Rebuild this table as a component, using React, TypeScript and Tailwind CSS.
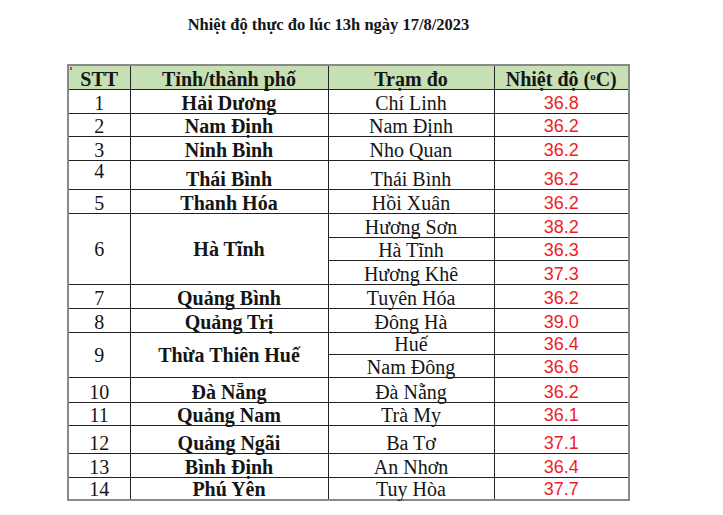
const serif = { fontFamily: '"Liberation Serif", "Times New Roman", serif' };

type Station = { name: string; temp: string; h: number };
type Row = { stt: string; province: string; stations: Station[]; sttTop?: boolean };

const rows: Row[] = [
  { stt: '1', province: 'Hải Dương', stations: [{ name: 'Chí Linh', temp: '36.8', h: 24 }] },
  { stt: '2', province: 'Nam Định', stations: [{ name: 'Nam Định', temp: '36.2', h: 23 }] },
  { stt: '3', province: 'Ninh Bình', stations: [{ name: 'Nho Quan', temp: '36.2', h: 24 }] },
  { stt: '4', province: 'Thái Bình', sttTop: true, stations: [{ name: 'Thái Bình', temp: '36.2', h: 29 }] },
  { stt: '5', province: 'Thanh Hóa', stations: [{ name: 'Hồi Xuân', temp: '36.2', h: 24 }] },
  {
    stt: '6',
    province: 'Hà Tĩnh',
    stations: [
      { name: 'Hương Sơn', temp: '38.2', h: 24 },
      { name: 'Hà Tĩnh', temp: '36.3', h: 23 },
      { name: 'Hương Khê', temp: '37.3', h: 24 },
    ],
  },
  { stt: '7', province: 'Quảng Bình', stations: [{ name: 'Tuyên Hóa', temp: '36.2', h: 24 }] },
  { stt: '8', province: 'Quảng Trị', stations: [{ name: 'Đông Hà', temp: '39.0', h: 24 }] },
  {
    stt: '9',
    province: 'Thừa Thiên Huế',
    stations: [
      { name: 'Huế', temp: '36.4', h: 22 },
      { name: 'Nam Đông', temp: '36.6', h: 23 },
    ],
  },
  { stt: '10', province: 'Đà Nẵng', stations: [{ name: 'Đà Nẵng', temp: '36.2', h: 25 }] },
  { stt: '11', province: 'Quảng Nam', stations: [{ name: 'Trà My', temp: '36.1', h: 23 }] },
  { stt: '12', province: 'Quảng Ngãi', stations: [{ name: 'Ba Tơ', temp: '37.1', h: 28 }] },
  { stt: '13', province: 'Bình Định', stations: [{ name: 'An Nhơn', temp: '36.4', h: 24 }] },
  { stt: '14', province: 'Phú Yên', stations: [{ name: 'Tuy Hòa', temp: '37.7', h: 23 }] },
];

const cell = 'border border-[#222] p-0 text-center leading-[20px]';

export default function App() {
  return (
    <div className="min-h-screen w-[723px] bg-white text-[#151515]" style={serif}>
      <div className="w-[657px] pt-[15px] text-center text-[16.5px] font-bold leading-[19px]">
        Nhiệt độ thực đo lúc 13h ngày 17/8/2023
      </div>

      <table className="ml-[67px] mt-[30px] w-[561px] table-fixed border-collapse border-2 border-[#8a8a8a] text-[20px]">
        <colgroup>
          <col className="w-[62px]" />
          <col className="w-[198px]" />
          <col className="w-[166px]" />
          <col className="w-[135px]" />
        </colgroup>
        <thead>
          <tr className="h-[24px] bg-[#c6e0b4] font-bold">
            <th className={`${cell} relative align-bottom`}>
              <span className="absolute left-[1px] top-[1px] h-[3px] w-[2px] bg-[#e53935]" />
              STT
            </th>
            <th className={`${cell} align-bottom`}>Tỉnh/thành phố</th>
            <th className={`${cell} align-bottom`}>Trạm đo</th>
            <th className={`${cell} align-bottom`}>
              Nhiệt độ (<sup className="text-[11px] leading-none">o</sup>C)
            </th>
          </tr>
        </thead>
        <tbody>
          {rows.map((r) =>
            r.stations.map((s, i) => (
              <tr key={`${r.stt}-${i}`} style={{ height: s.h }}>
                {i === 0 && (
                  <>
                    <td
                      rowSpan={r.stations.length}
                      className={`${cell} ${r.stations.length > 1 ? 'align-middle' : r.sttTop ? 'align-top' : 'align-bottom'}`}
                    >
                      {r.stt}
                    </td>
                    <td
                      rowSpan={r.stations.length}
                      className={`${cell} font-bold ${r.stations.length > 1 ? 'align-middle' : 'align-bottom'}`}
                    >
                      {r.province}
                    </td>
                  </>
                )}
                <td className={`${cell} align-bottom`}>{s.name}</td>
                <td
                  className={`${cell} align-bottom text-[18px] text-[#ee1d23]`}
                  style={{ fontFamily: '"Liberation Sans", Arial, sans-serif' }}
                >
                  {s.temp}
                </td>
              </tr>
            )),
          )}
        </tbody>
      </table>
    </div>
  );
}
